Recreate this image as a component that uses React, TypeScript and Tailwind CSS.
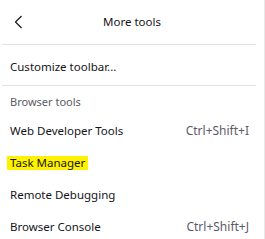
type Item = { label: string; shortcut?: string; highlight?: boolean };

const tools: Item[] = [
  { label: "Web Developer Tools", shortcut: "Ctrl+Shift+I" },
  { label: "Task Manager", highlight: true },
  { label: "Remote Debugging" },
  { label: "Browser Console", shortcut: "Ctrl+Shift+J" },
];

function MenuRow({ label, shortcut, highlight }: Item) {
  return (
    <div className="flex h-8 items-center justify-between pl-[10px] pr-[15px]">
      <span className={highlight ? "bg-[#fff200] -ml-[3px] px-[3px] leading-[14px]" : ""}>{label}</span>
      {shortcut && <span className="text-[12px] text-[#5b5b66]">{shortcut}</span>}
    </div>
  );
}

export default function App() {
  return (
    <div className="w-[265px] h-[239px] bg-white overflow-hidden border-r border-[#e8e8e8] text-[11.5px] text-[#15141a] font-['Noto_Sans',sans-serif]">
      <div className="flex h-[44px] items-center pl-[14px]">
        <svg width="9" height="14" viewBox="0 0 9 14" fill="none" stroke="#15141a" strokeWidth="1.2">
          <polyline points="7.5,1 1.5,7 7.5,13" />
        </svg>
        <div className="flex-1 text-center pr-[23px]">More tools</div>
      </div>
      <div className="ml-[2px] mr-[8px] h-px bg-[#e0e0e6]" />
      <div className="pt-[6px] pb-[2px]">
        <MenuRow label="Customize toolbar..." />
      </div>
      <div className="ml-[2px] mr-[8px] h-px bg-[#e0e0e6]" />
      <div className="flex h-[29px] items-center pl-[10px] pt-[3px] text-[11px] text-[#5b5b66]">Browser tools</div>
      {tools.map((t) => (
        <MenuRow key={t.label} {...t} />
      ))}
    </div>
  );
}
